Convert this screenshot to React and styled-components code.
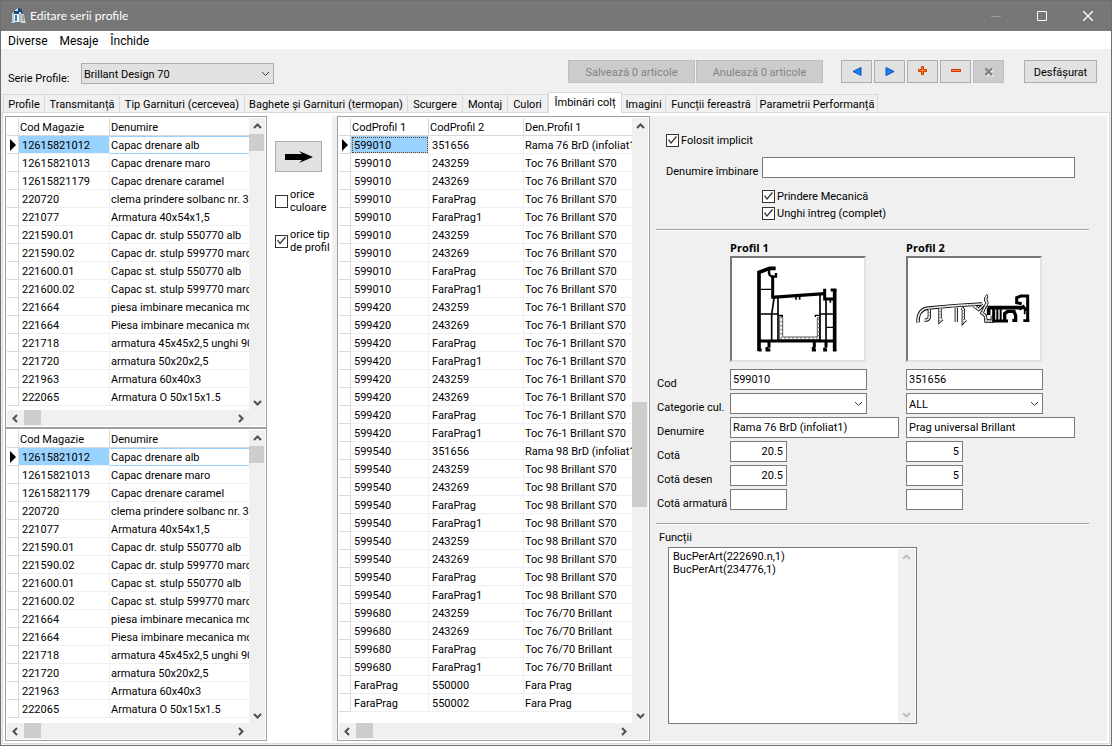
import React from 'react';
import styled, { createGlobalStyle, css } from 'styled-components';

const GlobalStyle = createGlobalStyle`
  * { box-sizing: border-box; }
  body {
    margin: 0;
    background: #f0f0f0;
    color: #000;
    font: 11px/13px Roboto, "Noto Sans", sans-serif;
  }
  button, input, select, textarea {
    font: inherit;
    color: inherit;
    margin: 0;
    border-radius: 0;
  }
`;

const Window = styled.div`
  display: flex;
  flex-direction: column;
  min-height: 100vh;
  border: 1px solid #6f6f6f;
  background: #f0f0f0;
`;

const TitleBar = styled.header`
  display: flex;
  align-items: center;
  height: 30px;
  padding-left: 10px;
  background: #777;
  color: #fff;
`;

const Title = styled.h1`
  flex: 1;
  margin: 0 0 0 3px;
  font: 12px/16px Lato, "Noto Sans", sans-serif;
`;

const CaptionButton = styled.button`
  width: 46px;
  height: 28px;
  padding: 0;
  border: 0;
  background: none;
  svg { display: block; margin: 0 auto; }
`;

const MenuBar = styled.nav`
  display: flex;
  align-items: center;
  gap: 12px;
  height: 18px;
  padding: 1px 7px 0;
  background: #fff;
`;

const MenuItem = styled.a`
  color: #000;
  font-size: 12px;
  line-height: 18px;
  text-decoration: none;
`;

const Toolbar = styled.div`
  display: flex;
  align-items: flex-start;
  height: 43px;
  padding: 11px 14px 0 7px;
`;

const SeriesLabel = styled.label`
  width: 73px;
  padding-top: 12px;
`;

const SelectBox = styled.div`
  position: relative;
  width: ${p => p.$width}px;
  height: 21px;
  margin-top: ${p => p.$top || 0}px;
  svg {
    position: absolute;
    right: 4px;
    top: 6px;
    pointer-events: none;
  }
`;

const Select = styled.select`
  appearance: none;
  display: block;
  width: 100%;
  height: 21px;
  padding: 1px 20px 0 2px;
  border: 1px solid ${p => (p.$grey ? '#adadad' : '#7a7a7a')};
  background: ${p => (p.$grey ? '#e1e1e1' : '#fff')};
`;

const ButtonGroup = styled.div`
  display: flex;
  gap: ${p => p.$gap}px;
  margin-left: ${p => p.$left};
`;

const Button = styled.button`
  display: flex;
  align-items: center;
  justify-content: center;
  width: ${p => p.$width}px;
  height: ${p => p.$height || 23}px;
  padding: 1px 0 0;
  border: 1px solid #adadad;
  background: #e1e1e1;
  &:disabled {
    border-color: #bfbfbf;
    background: #ccc;
    color: #838383;
  }
`;

const Tabs = styled.div`
  display: flex;
  align-items: flex-end;
  height: 20px;
  padding-left: 2px;
`;

const Tab = styled.button`
  width: ${p => p.$width}px;
  height: 18px;
  padding: 1px 0 0;
  white-space: nowrap;
  border: 1px solid #d9d9d9;
  border-width: 1px 1px 0 0;
  background: #f0f0f0;
  &:first-child { border-left-width: 1px; }
  ${p => p.$active && css`
    position: relative;
    height: 21px;
    margin-bottom: -1px;
    padding-bottom: 2px;
    border-left-width: 1px;
    background: #fff;
  `}
`;

const Page = styled.main`
  flex: 1;
  display: flex;
  margin: 0 1px 1px;
  padding: 3px 2px 2px;
  border: 1px solid #d9d9d9;
  background: #fff;
`;

const Sources = styled.div`
  display: grid;
  grid-template-rows: 312px 1fr;
  width: 262px;
`;

const Transfer = styled.div`
  width: 65px;
  padding: 25px 0 0 8px;
`;

const TransferChecks = styled.div`
  display: flex;
  flex-direction: column;
  gap: 14px;
  margin-top: 16px;
`;

const JointsArea = styled.div`
  display: flex;
  width: 318px;
  padding-left: 5px;
  background: #f0f0f0;
`;

const Frame = styled.section`
  flex: 1;
  display: grid;
  grid-template: minmax(0, 1fr) 16px / minmax(0, 1fr) 16px;
  padding: 1px;
  border: 1px solid #a0a0a0;
  background: #fff;
`;

const GridArea = styled.div`
  overflow: hidden;
`;

const Table = styled.table`
  width: 100%;
  table-layout: fixed;
  border-collapse: separate;
  border-spacing: 0;
`;

const HeadCell = styled.th`
  height: 18px;
  padding: 1px 0 0 1px;
  overflow: hidden;
  border: 1px solid #d9d9d9;
  border-width: 0 1px 1px 0;
  font-weight: normal;
  text-align: left;
  white-space: nowrap;
  &:last-child { border-right: 0; }
`;

const Cell = styled.td`
  height: 18px;
  padding: 1px 0 0 ${p => (p.$last ? 1 : 3)}px;
  overflow: hidden;
  border: 1px solid #f0f0f0;
  border-width: 0 1px 1px 0;
  white-space: nowrap;
  ${p => p.$last && css`border-right: 0;`}
  ${p => p.$selected && css`background: #99d1ff;`}
  ${p => p.$focus && css`outline: 1px dotted #7a3a10; outline-offset: -2px;`}
  ${p => p.$lined && css`box-shadow: inset 0 1px #99d1ff; border-bottom-color: #99d1ff;`}
`;

const Marker = styled.td`
  height: 18px;
  padding: 0 0 0 2px;
  border: 1px solid #d9d9d9;
  border-width: 0 1px 1px 0;
  svg { display: block; }
`;

const ScrollBar = styled.div`
  display: flex;
  flex-direction: ${p => (p.$vertical ? 'column' : 'row')};
  background: #f0f0f0;
`;

const ScrollArrow = styled.button`
  display: flex;
  align-items: center;
  justify-content: center;
  width: 17px;
  height: 16px;
  padding: 0;
  border: 0;
  background: none;
  color: ${p => (p.disabled ? '#bfbfbf' : '#505050')};
`;

const Thumb = styled.div`
  flex: none;
  background: #cdcdcd;
  ${p => (p.$vertical
    ? css`width: 15px; height: ${p.$size}px;`
    : css`width: ${p.$size}px; height: 15px;`)}
`;

const Space = styled.div`
  flex: ${p => p.$grow} 1 0;
`;

const Corner = styled.div`
  background: #f0f0f0;
`;

const Details = styled.section`
  flex: 1;
  display: flex;
  flex-direction: column;
  padding: 18px 18px 17px 6px;
  background: #f0f0f0;
`;

const Check = styled.label`
  display: flex;
  align-items: center;
  gap: 2px;
`;

const CheckInput = styled.input`
  appearance: none;
  flex: none;
  width: 13px;
  height: 13px;
  border: 1px solid #333;
  background: #fff;
  &:checked::after {
    content: "";
    display: block;
    width: 11px;
    height: 11px;
    background: #333;
    clip-path: polygon(1px 5px, 2px 4px, 4px 7px, 9px 1px, 10px 2px, 4px 9px);
  }
`;

const DefaultUse = styled.div`
  padding-left: 10px;
`;

const JointName = styled.div`
  display: flex;
  padding: 0 14px 0 10px;
  margin-top: 10px;
`;

const JointNameLabel = styled.label`
  flex: none;
  width: 96px;
  padding-top: 8px;
  white-space: nowrap;
`;

const Input = styled.input`
  width: ${p => (p.$width ? `${p.$width}px` : '100%')};
  height: 21px;
  padding: 0 3px 1px 2px;
  border: 1px solid #7a7a7a;
  background: #fff;
  text-align: ${p => (p.$right ? 'right' : 'left')};
`;

const JointChecks = styled.div`
  display: flex;
  flex-direction: column;
  gap: 4px;
  padding-left: 106px;
  margin: 12px 0 9px;
`;

const Divider = styled.hr`
  width: 100%;
  height: 2px;
  margin: 0;
  border: 0;
  border-top: 1px solid #a0a0a0;
  background: #fff;
`;

const Profiles = styled.div`
  display: grid;
  grid-template-columns: 74px 176px 1fr;
  margin-top: 10px;
`;

const ProfileCard = styled.figure`
  margin: 0;
`;

const ProfileName = styled.figcaption`
  font: bold 11px/13px "Open Sans", "Noto Sans", sans-serif;
  margin-bottom: 2px;
`;

const Picture = styled.div`
  width: 136px;
  height: 106px;
  border: 2px solid;
  border-color: #787878 #e3e3e3 #e3e3e3 #787878;
  background: #fff;
  svg { display: block; }
`;

const Fields = styled.div`
  display: grid;
  grid-template-columns: 74px 176px 1fr;
  row-gap: 3px;
  margin: 7px 0 13px;
`;

const FieldLabel = styled.label`
  padding: 8px 0 0 1px;
  white-space: nowrap;
`;

const FunctionsLabel = styled.label`
  margin: 6px 0 3px;
  padding-left: 3px;
`;

const Functions = styled.div`
  flex: 1;
  display: flex;
  width: 249px;
  margin-left: 12px;
  padding: 1px;
  border: 1px solid #7a7a7a;
  background: #fff;
`;

const FunctionsText = styled.textarea`
  flex: 1;
  min-width: 0;
  padding: 1px 3px;
  border: 0;
  resize: none;
  overflow: hidden;
  background: #fff;
`;

const tabs = [
  ['Profile', 42],
  ['Transmitanță', 75],
  ['Tip Garnituri (cercevea)', 125],
  ['Baghete și Garnituri (termopan)', 163],
  ['Scurgere', 55],
  ['Montaj', 45],
  ['Culori', 40],
  ['Îmbinări colț', 74],
  ['Imagini', 44],
  ['Funcții fereastră', 91],
  ['Parametrii Performanță', 121],
];

const articles = [
  ['12615821012', 'Capac drenare alb'],
  ['12615821013', 'Capac drenare maro'],
  ['12615821179', 'Capac drenare caramel'],
  ['220720', 'clema prindere solbanc nr. 30'],
  ['221077', 'Armatura 40x54x1,5'],
  ['221590.01', 'Capac dr. stulp 550770 alb'],
  ['221590.02', 'Capac dr. stulp 599770 maro'],
  ['221600.01', 'Capac st. stulp 550770 alb'],
  ['221600.02', 'Capac st. stulp 599770 maro'],
  ['221664', 'piesa imbinare mecanica mont'],
  ['221664', 'Piesa imbinare mecanica mont'],
  ['221718', 'armatura 45x45x2,5 unghi 90'],
  ['221720', 'armatura 50x20x2,5'],
  ['221963', 'Armatura 60x40x3'],
  ['222065', 'Armatura O 50x15x1.5'],
];

const second = ['243259', '243269', 'FaraPrag', 'FaraPrag1'];
const rowsFor = (code, list, name) => list.map(other => [code, other, name]);

const joints = [
  ['599010', '351656', 'Rama 76 BrD (infoliat1)'],
  ...rowsFor('599010', [...second, ...second], 'Toc 76 Brillant S70'),
  ...rowsFor('599420', [...second, ...second], 'Toc 76-1 Brillant S70'),
  ['599540', '351656', 'Rama 98 BrD (infoliat1)'],
  ...rowsFor('599540', [...second, ...second], 'Toc 98 Brillant S70'),
  ...rowsFor('599680', second, 'Toc 76/70 Brillant'),
  ['FaraPrag', '550000', 'Fara Prag'],
  ['FaraPrag', '550002', 'Fara Prag'],
];

const arrowPaths = {
  up: 'M1 6 L4.500 2.500 L8 6',
  down: 'M1 3 L4.500 6.500 L8 3',
  left: 'M6 1 L2.500 4.500 L6 8',
  right: 'M3 1 L6.500 4.500 L3 8',
};

const Arrow = ({ dir, thin }) => (
  <svg width="9" height="9" viewBox="0 0 9 9" fill="none" stroke={thin ? '#444' : 'currentColor'} strokeWidth={thin ? 1 : 2}>
    <path d={arrowPaths[dir]} />
  </svg>
);

const VerticalScroll = ({ before, size, after, disabled }) => (
  <ScrollBar $vertical>
    <ScrollArrow aria-label="Sus" disabled={disabled}><Arrow dir="up" /></ScrollArrow>
    <Space $grow={before} />
    {size > 0 && <Thumb $vertical $size={size} />}
    <Space $grow={after} />
    <ScrollArrow aria-label="Jos" disabled={disabled}><Arrow dir="down" /></ScrollArrow>
  </ScrollBar>
);

const DataGrid = ({ name, heads, widths, rows, focus, before, size, after }) => (
  <Frame>
    <GridArea>
      <Table aria-label={name}>
        <colgroup>
          <col width="12" />
          {widths.map((w, i) => <col key={i} width={w} />)}
          <col />
        </colgroup>
        <thead>
          <tr>
            <HeadCell />
            {heads.map(h => <HeadCell key={h}>{h}</HeadCell>)}
          </tr>
        </thead>
        <tbody>
          {rows.map((row, r) => (
            <tr key={r}>
              <Marker>
                {r === 0 && (
                  <svg width="8" height="12" viewBox="0 0 8 12"><path d="M1 0 L7 6 L1 12Z" /></svg>
                )}
              </Marker>
              {row.map((value, c) => (
                <Cell
                  key={c}
                  $last={c === row.length - 1}
                  $selected={r === 0 && c === 0}
                  $focus={focus && r === 0 && c === 0}
                  $lined={!focus && r === 0 && c > 0}
                >
                  {value}
                </Cell>
              ))}
            </tr>
          ))}
        </tbody>
      </Table>
    </GridArea>
    <VerticalScroll before={before} size={size} after={after} />
    <ScrollBar>
      <ScrollArrow aria-label="Stânga"><Arrow dir="left" /></ScrollArrow>
      <Thumb $size={17} />
      <Space $grow={1} />
      <ScrollArrow aria-label="Dreapta"><Arrow dir="right" /></ScrollArrow>
    </ScrollBar>
    <Corner />
  </Frame>
);

const Combo = ({ id, width, value, grey, top }) => (
  <SelectBox $width={width} $top={top}>
    <Select id={id} $grey={grey} defaultValue={value} aria-label={id}>
      <option>{value}</option>
    </Select>
    <Arrow dir="down" thin />
  </SelectBox>
);

const CheckBox = ({ checked, children }) => (
  <Check>
    <CheckInput type="checkbox" defaultChecked={checked} />
    <span>{children}</span>
  </Check>
);

const AppIcon = () => (
  <svg width="16" height="16" viewBox="0 0 16 16">
    <path d="M3 6 V4 C4 1 6 0 7.500 0 C10 0 11.500 2 11.500 6Z" fill="#174a7c" />
    <path d="M4 2 L7 0 V3 H4Z M8 4 H10 V6 H8Z" fill="#cfe4f2" />
    <path d="M3 6 H11 V14 H3Z" fill="#f1f4f5" />
    <path d="M1 5 L3 4 V13 L4 15 H0 L1 13Z" fill="#b3cbdb" />
    <path d="M4 7 H6 V13 H4Z" fill="#3d79ad" />
    <path d="M10 6 L13 6 L14 13 L15 15 H10Z" fill="#cfd6da" />
    <path d="M9 6 V14 M12 7 V13" stroke="#64737d" />
  </svg>
);

const NavIcon = ({ kind }) => (
  <svg width="14" height="14" viewBox="0 0 14 14">
    {kind === 'prev' && <path d="M11 2.500 V10.500 L3 6.500Z" fill="#1683ee" stroke="#0a50bd" />}
    {kind === 'next' && <path d="M3 2.500 V10.500 L11 6.500Z" fill="#1683ee" stroke="#0a50bd" />}
    {kind === 'add' && <path d="M5.500 1.500 H7.500 V4.500 H10.500 V6.500 H7.500 V9.500 H5.500 V6.500 H2.500 V4.500 H5.500Z" fill="#ff8a1c" stroke="#d8320a" />}
    {kind === 'remove' && <path d="M2.500 4.500 H11.500 V6.500 H2.500Z" fill="#ff8a1c" stroke="#d8320a" />}
    {kind === 'cancel' && (
      <>
        <path d="M4.500 4.500 L11 11 M11 4.500 L4.500 11" stroke="#fff" strokeWidth="2" />
        <path d="M3.500 3.500 L10 10 M10 3.500 L3.500 10" stroke="#808080" strokeWidth="2.400" />
      </>
    )}
  </svg>
);

const FrameProfile = () => (
  <svg width="132" height="102" viewBox="21 9 396 306" fill="none" stroke="#000">
    <path d="M102 288 V52 L134 40 H152" strokeWidth="11" />
    <path d="M133 44 C129 58 136 64 143 65 M143 65 H153 V54" strokeWidth="7" />
    <path d="M143 62 V126" strokeWidth="9" />
    <path d="M139 127 L299 116" strokeWidth="10" />
    <path d="M299 101 V132 H329 M317 105 H334" strokeWidth="9" />
    <path d="M329 102 V288" strokeWidth="11" />
    <path d="M102 258 H329" strokeWidth="9" />
    <path d="M107 103 H142 M107 177 H160 M285 177 H326 M304 217 H326" strokeWidth="4" />
    <path d="M147 130 L140 178 V255" strokeWidth="5" />
    <path d="M159 128 V255 M285 120 V255" strokeWidth="5" />
    <path d="M303 132 V255" strokeWidth="5" />
    <path d="M213 125 V134 M224 125 V134 M316 134 V143" strokeWidth="5" />
    <path d="M161 181 H172 V185 M271 186 V181 H283" strokeWidth="4" />
    <path d="M164 184 H173 V246 H277 V188 H284 V254 H164Z" strokeWidth="2" />
    <path d="M169 186 V249 H281 V190" stroke="#777" strokeWidth="4" strokeDasharray="4 8" />
    <path d="M132 260 V278 M268 260 V278 M303 260 V278" strokeWidth="9" />
    <path d="M126 276 V285 H136 M265 276 V285 H273 M299 278 V285 H306 M100 285 H110 M324 285 H334" strokeWidth="9" />
  </svg>
);

const sillTube = 'M54 202 C53 180 62 162 86 159 L165 152 L246 147 M88 162 V182 C88 192 84 196 74 195 M120 160 V198 L127 192 M169 158 V201 M186 158 L190 164 V201 L197 194 M222 153 L236 163 L250 150 M257 121 C266 126 250 131 260 140 C264 150 250 158 250 166 L246 174 L256 182 L258 198 H277 V182';

const SillProfile = () => (
  <svg width="132" height="102" viewBox="24 9 396 306" fill="none" stroke="#000">
    <path d={sillTube} strokeWidth="10" />
    <path d={sillTube} stroke="#fff" strokeWidth="5" />
    <path d={sillTube} stroke="#777" strokeWidth="5" strokeDasharray="2 7" />
    <path d="M263 158 H367 M266 158 V180" strokeWidth="11" />
    <path d="M281 160 V198 M277 198 H324" strokeWidth="9" />
    <path d="M292 162 V198 M302 162 V198" strokeWidth="6" />
    <path d="M314 198 V176 L323 169 H342 L347 182 V196 H337" strokeWidth="10" />
    <path d="M367 158 L374 162 V178" strokeWidth="5" />
    <path d="M383 201 V123 H363 L350 128 V143 L365 146" strokeWidth="9" />
    <path d="M370 197 H388 M358 163 L370 154 L379 166" strokeWidth="8" />
  </svg>
);

const fields = [
  { label: 'Cod', width: 137, values: ['599010', '351656'] },
  { label: 'Categorie cul.', width: 137, combo: true, values: ['', 'ALL'] },
  { label: 'Denumire', width: 169, values: ['Rama 76 BrD (infoliat1)', 'Prag universal Brillant'] },
  { label: 'Cotă', width: 57, right: true, values: ['20.5', '5'] },
  { label: 'Cotă desen', width: 57, right: true, values: ['20.5', '5'] },
  { label: 'Cotă armatură', width: 57, right: true, values: ['', ''] },
];

const App = () => {
  return (
    <>
      <GlobalStyle />
      <Window>
        <TitleBar>
          <AppIcon />
          <Title>Editare serii profile</Title>
          <CaptionButton aria-label="Minimizare">
            <svg width="10" height="10" viewBox="0 0 10 10"><path d="M0 5.500 H10" stroke="#999" /></svg>
          </CaptionButton>
          <CaptionButton aria-label="Maximizare">
            <svg width="10" height="10" viewBox="0 0 10 10"><path d="M.5 .5 H9.500 V9.500 H.5Z" fill="none" stroke="#fff" /></svg>
          </CaptionButton>
          <CaptionButton aria-label="Închidere">
            <svg width="10" height="10" viewBox="0 0 10 10"><path d="M0 0 L10 10 M10 0 L0 10" stroke="#fff" strokeWidth="1.300" /></svg>
          </CaptionButton>
        </TitleBar>
        <MenuBar>
          <MenuItem href="#diverse">Diverse</MenuItem>
          <MenuItem href="#mesaje">Mesaje</MenuItem>
          <MenuItem href="#inchide">Închide</MenuItem>
        </MenuBar>
        <Toolbar>
          <SeriesLabel htmlFor="serie">Serie Profile:</SeriesLabel>
          <Combo id="serie" width={193} value="Brillant Design 70" grey top={3} />
          <ButtonGroup $gap={1} $left="auto">
            <Button $width={127} disabled>Salvează 0 articole</Button>
            <Button $width={127} disabled>Anulează 0 articole</Button>
          </ButtonGroup>
          <ButtonGroup $gap={2} $left="18px">
            <Button $width={31} aria-label="Înapoi"><NavIcon kind="prev" /></Button>
            <Button $width={31} aria-label="Înainte"><NavIcon kind="next" /></Button>
            <Button $width={31} aria-label="Adaugă"><NavIcon kind="add" /></Button>
            <Button $width={31} aria-label="Șterge"><NavIcon kind="remove" /></Button>
            <Button $width={31} aria-label="Anulează" disabled><NavIcon kind="cancel" /></Button>
          </ButtonGroup>
          <ButtonGroup $gap={0} $left="20px">
            <Button $width={73}>Desfășurat</Button>
          </ButtonGroup>
        </Toolbar>
        <Tabs role="tablist">
          {tabs.map(([label, width]) => (
            <Tab key={label} role="tab" $width={width} $active={label === 'Îmbinări colț'}>{label}</Tab>
          ))}
        </Tabs>
        <Page>
          <Sources>
            <DataGrid name="Articole" heads={['Cod Magazie', 'Denumire']} widths={[91]} rows={articles} before={0} size={17} after={1} />
            <DataGrid name="Articole profil" heads={['Cod Magazie', 'Denumire']} widths={[91]} rows={articles} before={0} size={17} after={1} />
          </Sources>
          <Transfer>
            <Button $width={47} $height={31} aria-label="Adaugă în îmbinare">
              <svg width="28" height="14" viewBox="0 0 28 14">
                <path d="M0 4 H17 L14 1 L28 7 L14 13 L17 10 H0Z" />
              </svg>
            </Button>
            <TransferChecks>
              <CheckBox>orice<br />culoare</CheckBox>
              <CheckBox checked>orice tip<br />de profil</CheckBox>
            </TransferChecks>
          </Transfer>
          <JointsArea>
            <DataGrid name="Îmbinări" heads={['CodProfil 1', 'CodProfil 2', 'Den.Profil 1']} widths={[78, 95]} rows={joints} focus before={267} size={105} after={199} />
          </JointsArea>
          <Details>
            <DefaultUse>
              <CheckBox checked>Folosit implicit</CheckBox>
            </DefaultUse>
            <JointName>
              <JointNameLabel htmlFor="imbinare">Denumire îmbinare</JointNameLabel>
              <Input id="imbinare" />
            </JointName>
            <JointChecks>
              <CheckBox checked>Prindere Mecanică</CheckBox>
              <CheckBox checked>Unghi întreg (complet)</CheckBox>
            </JointChecks>
            <Divider />
            <Profiles>
              <span />
              <ProfileCard>
                <ProfileName>Profil 1</ProfileName>
                <Picture><FrameProfile /></Picture>
              </ProfileCard>
              <ProfileCard>
                <ProfileName>Profil 2</ProfileName>
                <Picture><SillProfile /></Picture>
              </ProfileCard>
            </Profiles>
            <Fields>
              {fields.map(({ label, width, combo, right, values }) => (
                <React.Fragment key={label}>
                  <FieldLabel htmlFor={`${label} 1`}>{label}</FieldLabel>
                  {values.map((value, i) => (combo
                    ? <Combo key={i} id={`${label} ${i + 1}`} width={width} value={value} />
                    : <Input key={i} id={`${label} ${i + 1}`} aria-label={`${label} ${i + 1}`} $width={width} $right={right} defaultValue={value} />
                  ))}
                </React.Fragment>
              ))}
            </Fields>
            <Divider />
            <FunctionsLabel htmlFor="functii">Funcții</FunctionsLabel>
            <Functions>
              <FunctionsText id="functii" defaultValue={'BucPerArt(222690.n,1)\nBucPerArt(234776,1)'} />
              <VerticalScroll before={1} size={0} after={1} disabled />
            </Functions>
          </Details>
        </Page>
      </Window>
    </>
  );
};

export default App;
